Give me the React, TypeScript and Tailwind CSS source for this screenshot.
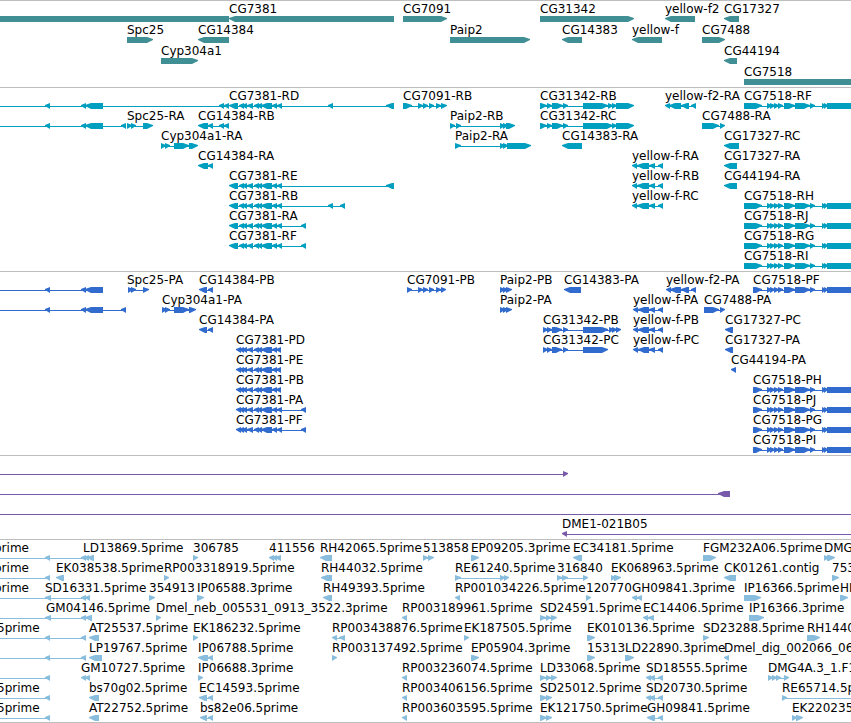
type Dir = "l" | "r" | "n";

type Feature = {
  name: string;
  dir: Dir;
  blocks: number[][];
  labelX?: number;
  from?: number;
  to?: number;
};

// past the edges of the visible region
const LEFT = -10;
const RIGHT = 4000;

const l = (name: string, blocks: number[][], extra = {}): Feature => ({ name, dir: "l", blocks, ...extra });
const r = (name: string, blocks: number[][], extra = {}): Feature => ({ name, dir: "r", blocks, ...extra });

const genes: Feature[][] = [
  [
    { name: "", dir: "n", blocks: [[LEFT, 229]] },
    l("CG7381", [[229, 394]]),
    r("CG7091", [[403, 447]]),
    r("CG31342", [[540, 634]]),
    l("yellow-f2", [[665, 695]]),
    l("CG17327", [[724, 739]]),
  ],
  [
    r("Spc25", [[127, 153]]),
    l("CG14384", [[198, 229]]),
    r("Paip2", [[450, 530]]),
    l("CG14383", [[562, 582]]),
    l("yellow-f", [[632, 662]]),
    r("CG7488", [[702, 725]]),
  ],
  [r("Cyp304a1", [[161, 198]]), l("CG44194", [[724, 737]])],
  [r("CG7518", [[744, RIGHT]])],
];

const cg7381Core = [[239, 244], [242, 247], [247, 253], [254, 259], [257, 262], [261, 272], [272, 277], [277, 282]];
const cg7381 = [[229, 238], ...cg7381Core];
const cg7381P = [[236, 241], ...cg7381Core.slice(0, 7), [276, 281]];
const cg7381PLong = [[236, 241], ...cg7381Core, [301, 306]];
const cg31342 = [[540, 547], [547, 552], [552, 563], [563, 568]];
const cg31342P = [[543, 548], [547, 552], [552, 562], [563, 568]];
const cg7518Tail = [[767, 772], [770, 775], [774, 779], [778, 783], [784, 795], [795, 810], [810, 815], [822, 826], [824, 828], [827, RIGHT]];
const cg7518 = [[744, 762], ...cg7518Tail];
const cg7518P = [[753, 762], ...cg7518Tail];
const yellowF = [[632, 637], [637, 649], [649, 655], [658, 663]];
const yellowFP = [[633, 638], [638, 649], [649, 655], [658, 663]];
const paip2P = [[500, 505], [503, 508], [506, 512]];
const upstream = [[45, 50], [81, 86], [85, 103]];

const transcripts: Feature[][] = [
  [
    l("", [...upstream, [219, 224], [224, 229]], { from: LEFT }),
    l("CG7381-RD", [...cg7381, [328, 333], [386, 394]]),
    r("CG7091-RB", [[403, 412], [418, 423], [423, 428], [429, 434], [436, 441], [441, 447]]),
    r("CG31342-RB", [...cg31342, [583, 608], [608, 613], [612, 617], [616, 634]]),
    l("yellow-f2-RA", [[665, 670], [669, 681], [681, 689], [691, 696]]),
    r("CG7518-RF", cg7518),
  ],
  [
    l("", [...upstream, [121, 126]], { from: LEFT }),
    r("Spc25-RA", [[127, 132], [131, 136], [143, 153]]),
    l("CG14384-RB", [[198, 208], [208, 213], [219, 224], [224, 229]]),
    r("Paip2-RB", [[450, 455], [456, 461], [500, 505], [503, 508], [506, 515]]),
    r("CG31342-RC", [...cg31342, [583, 613], [612, 617], [616, 634]]),
    r("CG7488-RA", [[702, 719], [720, 725]]),
  ],
  [
    r("Cyp304a1-RA", [[161, 166], [165, 170], [174, 189], [189, 198]]),
    r("Paip2-RA", [[455, 461], [500, 505], [503, 508], [507, 531]]),
    l("CG14383-RA", [[562, 582]]),
    l("CG17327-RC", [[724, 739]]),
  ],
  [l("CG14384-RA", [[198, 208], [208, 213]]), l("yellow-f-RA", yellowF), l("CG17327-RA", [[724, 737]])],
  [l("CG7381-RE", [...cg7381, [386, 394]]), l("yellow-f-RB", yellowF), l("CG44194-RA", [[724, 737]])],
  [l("CG7381-RB", [...cg7381, [328, 333], [340, 345]]), l("yellow-f-RC", yellowF), r("CG7518-RH", cg7518)],
  [l("CG7381-RA", [...cg7381, [301, 306]]), r("CG7518-RJ", cg7518)],
  [l("CG7381-RF", [...cg7381, [301, 306]]), r("CG7518-RG", cg7518)],
  [r("CG7518-RI", cg7518)],
];

const proteins: Feature[][] = [
  [
    l("", upstream, { from: LEFT }),
    r("Spc25-PA", [[128, 133], [131, 136], [143, 149]], { labelX: 127 }),
    l("CG14384-PB", [[199, 207], [208, 213]]),
    r("CG7091-PB", [[407, 412], [418, 423], [423, 428], [429, 434], [436, 441], [441, 446]]),
    r("Paip2-PB", paip2P),
    l("CG14383-PA", [[564, 581]]),
    l("yellow-f2-PA", [[666, 671], [670, 681], [681, 689], [691, 696]]),
    r("CG7518-PF", cg7518P),
  ],
  [
    l("", [...upstream, [121, 126]], { from: LEFT }),
    r("Cyp304a1-PA", [[162, 167], [165, 170], [174, 189], [189, 196]]),
    r("Paip2-PA", paip2P),
    l("yellow-f-PA", yellowFP),
    r("CG7488-PA", [[704, 719], [720, 725]]),
  ],
  [
    l("CG14384-PA", [[199, 207], [208, 213]]),
    r("CG31342-PB", [...cg31342P, [583, 608], [609, 614], [612, 617], [616, 621]]),
    l("yellow-f-PB", yellowFP),
    l("CG17327-PC", [[725, 733]]),
  ],
  [
    l("CG7381-PD", cg7381P),
    r("CG31342-PC", [...cg31342P, [583, 608]]),
    l("yellow-f-PC", yellowFP),
    l("CG17327-PA", [[725, 733]]),
  ],
  [l("CG7381-PE", cg7381P), l("CG44194-PA", [[731, 736]])],
  [l("CG7381-PB", cg7381P), r("CG7518-PH", cg7518P)],
  [l("CG7381-PA", cg7381PLong), r("CG7518-PJ", cg7518P)],
  [l("CG7381-PF", cg7381PLong), r("CG7518-PG", cg7518P)],
  [r("CG7518-PI", cg7518P)],
];

const bacs: Feature[][] = [
  [r("", [[563, 568]], { from: LEFT })],
  [l("", [[718, 730]], { from: LEFT })],
  [l("", [], { from: LEFT, to: RIGHT })],
  [l("DME1-021B05", [[562, 567]], { to: RIGHT })],
];

const three = [[540, 546], [546, 551], [551, 557]];
const two = [[540, 547], [546, 552]];
const sd = [[646, 651], [649, 655], [658, 663]];

const ests: Feature[][] = [
  [
    l("prime", [[45, 50], [81, 86]], { labelX: -6, from: LEFT }),
    l("LD13869.5prime", [[84, 89], [87, 94]], { labelX: 83 }),
    r("306785", [[193, 198]]),
    l("411556", [[269, 274], [272, 277], [275, 281]]),
    l("RH42065.5prime", [[320, 332]]),
    r("513858", [[423, 428], [428, 434]]),
    r("EP09205.3prime", [[471, 479]]),
    l("EC34181.5prime", [[573, 582]]),
    r("FGM232A06.5prime", [[703, 716]]),
    r("DMG", [[824, 829], [827, 835]]),
  ],
  [
    l("prime", [[45, 50]], { labelX: -6, from: LEFT }),
    l("EK038538.5prime", [[56, 64]]),
    r("RP003318919.5prime", [[164, 169]]),
    l("RH44032.5prime", [[321, 332]]),
    r("RE61240.5prime", [[455, 461], [500, 505], [504, 509]]),
    r("316840", [[557, 562], [562, 568], [583, 588]]),
    r("EK068963.5prime", [[611, 616], [614, 621]]),
    l("CK01261.contig", [[724, 736]]),
    r("753", [[832, 839]]),
  ],
  [
    l("prime", [], { labelX: -6, from: LEFT, to: 50 }),
    l("SD16331.5prime", [[45, 51], [81, 86], [85, 90]]),
    r("354913", [[149, 155]]),
    r("IP06588.3prime", [[197, 204]]),
    l("RH49393.5prime", [[323, 332]]),
    l("RP001034226.5prime", [[455, 460]]),
    r("120770", [[586, 591]]),
    l("GH09841.3prime", [[632, 637], [637, 642]]),
    r("IP16366.5prime", [[744, 761]]),
    r("HL", [[840, 848]]),
  ],
  [
    l("GM04146.5prime", [[45, 51], [81, 86], [85, 92]], { labelX: 46, from: LEFT }),
    r("Dmel_neb_005531_0913_3522.3prime", [[156, 161]]),
    l("RP003189961.5prime", [[402, 407]]),
    r("SD24591.5prime", three),
    l("EC14406.5prime", [[643, 648], [648, 654]]),
    r("IP16366.3prime", [[749, 764]]),
  ],
  [
    l("5prime", [[45, 50], [81, 86]], { labelX: -3, from: LEFT }),
    l("AT25537.5prime", [[89, 99]]),
    r("EK186232.5prime", [[193, 198]]),
    l("RP003438876.5prime", [[332, 337], [339, 345]]),
    r("EK187505.5prime", [[464, 469]]),
    r("EK010136.5prime", [[587, 595]]),
    r("SD23288.5prime", [[703, 709]]),
    r("RH1440", [[807, 820]]),
  ],
  [
    l("", [[45, 50], [81, 86]], { from: LEFT }),
    l("LP19767.5prime", [[89, 102]]),
    l("IP06788.5prime", [[198, 208], [208, 213]]),
    r("RP003137492.5prime", [[332, 337]]),
    r("EP05904.3prime", [[471, 479]]),
    r("15313", [[587, 595]]),
    r("LD22890.3prime", [[625, 634]]),
    l("Dmel_dig_002066_06", [[724, 729]]),
  ],
  [
    l("", [[45, 50]], { from: LEFT }),
    l("GM10727.5prime", [[81, 86], [85, 90]]),
    r("IP06688.3prime", [[198, 203]]),
    l("RP003236074.5prime", [[402, 407]]),
    r("LD33068.5prime", three),
    l("SD18555.5prime", sd),
    r("DMG4A.3_1.F1", [[768, 773], [772, 777], [776, 781], [784, 789]]),
  ],
  [
    l("5prime", [[45, 50]], { labelX: -3, from: LEFT }),
    l("bs70g02.5prime", [[89, 99]]),
    l("EC14593.5prime", [[199, 207], [208, 213]]),
    l("RP003406156.5prime", [[402, 407]]),
    r("SD25012.5prime", two),
    l("SD20730.5prime", sd),
    r("RE65714.5p", [[782, 787]], { to: RIGHT }),
  ],
  [
    l("5prime", [[45, 50]], { labelX: -3, from: LEFT }),
    l("AT22752.5prime", [[89, 99]]),
    l("bs82e06.5prime", [[200, 207], [208, 213]]),
    l("RP003603595.5prime", [[402, 407]]),
    r("EK121750.5prime", two),
    l("GH09841.5prime", [[647, 655], [658, 663]]),
    r("EK220235", [[792, 797], [796, 803]]),
  ],
];

function blockPath(a: number, b: number, dir: Dir) {
  const tip = Math.min(6, b - a);
  if (dir === "l") return `M${a} 2V3L${a + tip} 6H${b}V0H${a + tip}Z`;
  if (dir === "r") return `M${b} 2V3L${b - tip} 6H${a}V0H${b - tip}Z`;
  return `M${a} 0H${b}V6H${a}Z`;
}

function Glyph({ feature }: { feature: Feature }) {
  const { blocks, dir } = feature;
  const from = feature.from ?? blocks[0][0];
  const to = feature.to ?? blocks[blocks.length - 1][1];
  // keep the intron line clear of the pointed ends
  const start = feature.from === undefined ? from + 2 : from;
  const end = feature.to === undefined ? to - 2 : to;
  return (
    <g>
      <rect x={start} y={3} width={Math.max(end - start, 0)} height={1} shapeRendering="crispEdges" />
      {blocks.map(([a, b]) => (
        <path key={a} d={blockPath(a, b, dir)} />
      ))}
    </g>
  );
}

function Row({ features }: { features: Feature[] }) {
  return (
    <div>
      <div className="relative z-10 h-3.5">
        {features
          .filter((f) => f.name)
          .map((f) => (
            <span
              key={f.name}
              className="absolute top-0 whitespace-nowrap text-black"
              style={{ left: f.labelX ?? f.blocks[0][0] }}
            >
              {f.name}
            </span>
          ))}
      </div>
      <svg className="block h-1.5 w-full fill-current" aria-hidden="true">
        {features.map((f, i) => (
          <Glyph key={i} feature={f} />
        ))}
      </svg>
    </div>
  );
}

function Track({ label, rows, className }: { label: string; rows: Feature[][]; className: string }) {
  return (
    <section
      aria-label={label}
      className={`flex flex-col overflow-hidden border-t border-[#bebebe] pt-px ${className}`}
    >
      {rows.map((features, i) => (
        <Row key={i} features={features} />
      ))}
    </section>
  );
}

export default function App() {
  return (
    <main className="w-full overflow-hidden bg-white font-['DejaVu_Sans',sans-serif] text-[12px] leading-[14px]">
      <Track label="Genes" rows={genes} className="gap-px pb-0.5 text-[#408f94]" />
      <Track label="Transcripts" rows={transcripts} className="pb-0.5 text-[#009fc0]" />
      <Track label="Proteins" rows={proteins} className="pb-0.5 text-[#316bcd]" />
      <Track label="BACs" rows={bacs} className="pb-0.5 text-[#7959a9]" />
      <Track label="ESTs" rows={ests} className="border-b pb-px text-[#88bddd]" />
    </main>
  );
}
